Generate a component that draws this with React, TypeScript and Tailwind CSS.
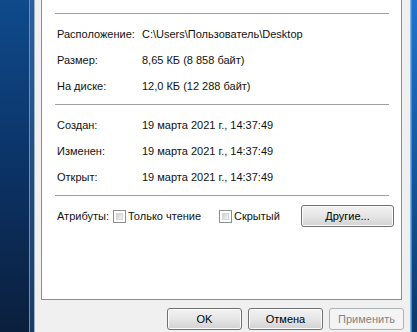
import React from "react";

const font = { fontFamily: '"Liberation Sans", Arial, sans-serif' };

function Row({ label, value }: { label: string; value: string }) {
  return (
    <div className="flex h-[26px] items-center pl-[15px] pt-[2px]">
      <div className="w-[85px]">{label}</div>
      <div>{value}</div>
    </div>
  );
}

function Sep() {
  return <div className="ml-[13px] mr-[12px] h-px bg-[#a0a0a0]" />;
}

function Check() {
  return (
    <div className="w-[13px] h-[13px] border border-[#8e8f8f] bg-white p-[2px]">
      <div className="w-full h-full bg-gradient-to-br from-[#cbcfd5] to-[#f6f6f6] border border-[#d6d6d6]" />
    </div>
  );
}

function Btn({ children, disabled, className }: { children: React.ReactNode; disabled?: boolean; className?: string }) {
  if (disabled) {
    return (
      <div className={"h-[22px] w-[75px] rounded-[3px] border border-[#adb2b5] bg-[#f4f4f4] flex items-center justify-center text-[#838383] " + (className ?? "")}>
        {children}
      </div>
    );
  }
  return (
    <div className={"h-[22px] w-[75px] rounded-[3px] border border-[#707070] bg-gradient-to-b from-[#f2f2f2] via-[#e6e6e6] to-[#d2d2d2] flex items-center justify-center text-black shadow-[inset_0_0_0_1px_#fcfcfc] " + (className ?? "")}>
      {children}
    </div>
  );
}

export default function App() {
  return (
    <div className="w-[417px] h-[332px] flex overflow-hidden text-[11px] text-[#111]" style={font}>
      {/* desktop / left frame */}
      <div className="w-[29px] h-full bg-gradient-to-b from-[#0f4a8c] via-[#0b3366] to-[#0a1f3d]" />
      <div className="w-px h-full bg-[#6f8fb5]" />
      <div className="w-[4px] h-full bg-gradient-to-b from-[#2b5f9e] to-[#1d3b62]" />
      <div className="w-px h-full bg-[#9db2cb]" />
      {/* dialog */}
      <div className="w-[375px] h-full bg-[#f0f0f0] flex flex-col">
        <div className="ml-[6px] mr-[8px] h-[300px] bg-white border-x border-b border-[#898c95] flex flex-col">
          <div className="h-[13px]" />
          <Sep />
          <div className="h-[6px]" />
          <Row label="Расположение:" value="C:\Users\Пользователь\Desktop" />
          <Row label="Размер:" value="8,65 КБ (8 858 байт)" />
          <Row label="На диске:" value="12,0 КБ (12 288 байт)" />
          <div className="h-[6px]" />
          <Sep />
          <div className="h-[6px]" />
          <Row label="Создан:" value="19 марта 2021 г., 14:37:49" />
          <Row label="Изменен:" value="19 марта 2021 г., 14:37:49" />
          <Row label="Открыт:" value="19 марта 2021 г., 14:37:49" />
          <div className="h-[6px]" />
          <Sep />
          <div className="h-[9px]" />
          <div className="flex items-center h-[22px] pl-[15px]">
            <span className="w-[56px] pt-[1px]">Атрибуты:</span>
            <Check />
            <span className="ml-[2px] w-[91px] pt-[1px]">Только чтение</span>
            <Check />
            <span className="ml-[2px] pt-[1px]">Скрытый</span>
            <Btn className="ml-auto mr-[7px] w-[93px]">Другие...</Btn>
          </div>
        </div>
        <div className="flex gap-[6px] justify-end mr-[6px] mt-[8px]">
          <Btn>OK</Btn>
          <Btn>Отмена</Btn>
          <Btn disabled>Применить</Btn>
        </div>
      </div>
      {/* right frame */}
      <div className="w-px h-full bg-[#7fb2e8]" />
      <div className="w-px h-full bg-[#3a8ae0]" />
      <div className="flex-1 h-full bg-gradient-to-b from-[#1f74d0] via-[#14589f] to-[#0c3a6c]" />
    </div>
  );
}
